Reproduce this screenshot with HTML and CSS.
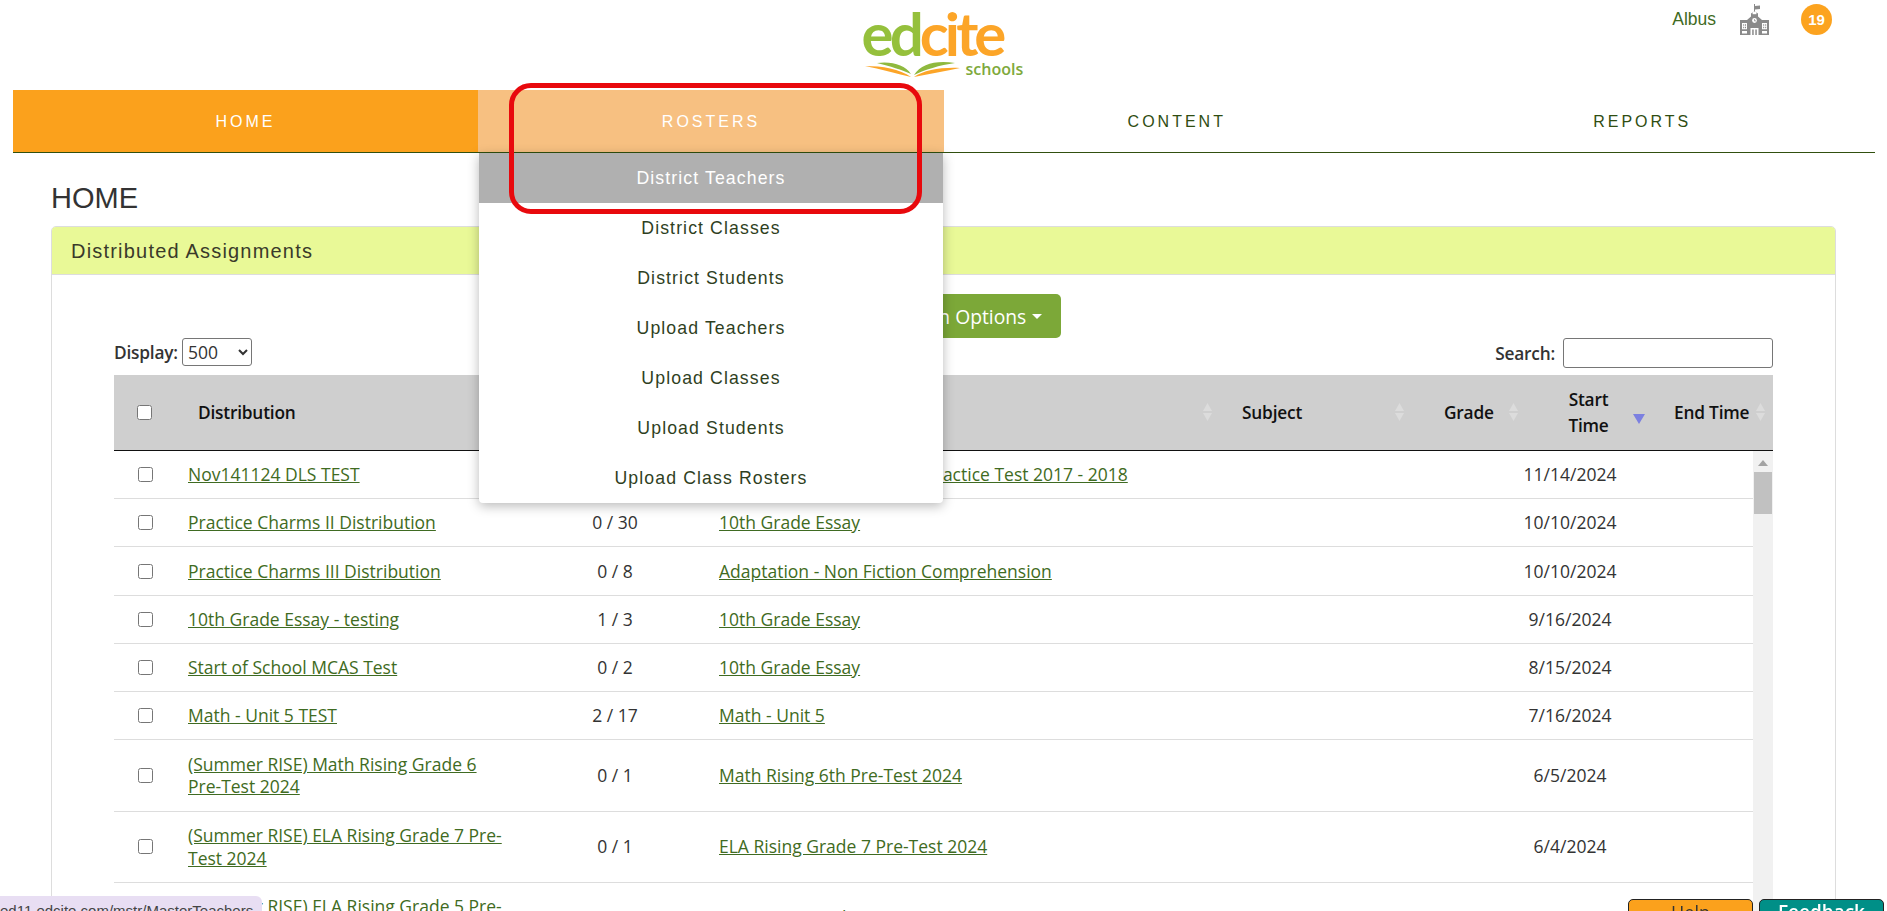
FILE: index.html
```html
<!DOCTYPE html>
<html lang="en">
<head>
<meta charset="utf-8">
<title>Edcite Schools - Home</title>
<link rel="stylesheet" href="styles.css">
</head>
<body>
<header class="top">
  <div></div>
  <a class="logo" href="#">
    <span class="logo-word"><span class="green">ed</span><span class="orange">cite</span></span>
    <span class="logo-sub">
      <svg class="book" viewBox="0 0 97 20" width="97" height="20" aria-hidden="true">
        <path fill="#fca528" d="M1 6C18 6 36 9 47 17C34 14 16 9 1 6Z"/>
        <path fill="#8fb93e" d="M13 3C28 1 41 5 47 14C38 10 26 6 13 3Z"/>
        <path fill="#8fb93e" d="M91 3C72 0 57 4 50 15C60 10 76 5 91 3Z"/>
        <path fill="#fca528" d="M96 8C78 7 60 10 50 17C65 14 82 11 96 8Z"/>
      </svg>
      <span class="logo-schools">schools</span>
    </span>
  </a>
  <div class="user">
    <span class="user-name">Albus</span>
    <svg class="school" viewBox="0 0 29 31" width="29" height="31" aria-hidden="true">
      <path fill="#8a8a8a" d="M14 0h1v2l5-0.5v3.5l-5 0.5v2l3 2v3l4 3.5h7v15.5h-29v-15.5h7l4-3.5v-3l3-2z"/>
      <g fill="#fff">
        <circle cx="14.5" cy="16.5" r="2.4"/>
        <rect x="12.6" y="7.6" width="3.8" height="2.6"/>
        <path d="M10.5 31v-7h8v7h-1.7v-5.4h-1.5v5.4h-1.6v-5.4h-1.5v5.4z"/>
        <path d="M2 19h5v6.300h-5zM3.200 20.200v1.500h1v-1.500zM5 20.200v1.500h1v-1.500zM3.200 22.700v1.600h1v-1.600zM5 22.700v1.600h1v-1.600z"/>
        <path d="M22 19h5v6.300h-5zM23.200 20.200v1.500h1v-1.500zM25.200 20.200v1.500h1v-1.500zM23.200 22.700v1.600h1v-1.600zM25.200 22.700v1.600h1v-1.600z"/>
        <rect x="2" y="27" width="5" height="2.500"/>
        <rect x="22" y="27" width="5" height="2.500"/>
      </g>
      <path fill="#8a8a8a" d="M14.200 15h.7v1.500h1.200v.7h-1.900z"/>
    </svg>
    <span class="badge">19</span>
  </div>
</header>

<nav class="nav">
  <a class="nav-item nav-home" href="#">HOME</a>
  <div class="nav-item nav-open">
    <a href="#">ROSTERS</a>
    <ul class="menu">
      <li class="menu-active"><a href="#">District Teachers</a></li>
      <li><a href="#">District Classes</a></li>
      <li><a href="#">District Students</a></li>
      <li><a href="#">Upload Teachers</a></li>
      <li><a href="#">Upload Classes</a></li>
      <li><a href="#">Upload Students</a></li>
      <li><a href="#">Upload Class Rosters</a></li>
    </ul>
  </div>
  <a class="nav-item" href="#">CONTENT</a>
  <a class="nav-item" href="#">REPORTS</a>
</nav>

<main class="main">
  <h1 class="title">HOME</h1>
  <section class="panel">
    <h2 class="panel-head">Distributed Assignments</h2>
    <div class="panel-body">
      <div class="actions"><button class="btn" type="button">Distribution Options<span class="caret"></span></button></div>
      <div class="controls">
        <label class="control">Display:
          <select class="select"><option>500</option></select>
        </label>
        <label class="control">Search:
          <input class="search" type="text">
        </label>
      </div>

      <table class="thead">
        <colgroup>
          <col class="h1"><col class="h2"><col class="h3"><col class="h4"><col class="h5"><col class="h6"><col class="h7"><col class="h8">
        </colgroup>
        <tr>
          <th class="th-check"><input class="check" type="checkbox"></th>
          <th class="th-dist">Distribution<span class="sort"></span></th>
          <th>Taken<span class="sort"></span></th>
          <th>Test<span class="sort"></span></th>
          <th class="th-subject">Subject<span class="sort"></span></th>
          <th class="th-grade">Grade<span class="sort"></span></th>
          <th class="th-start"><span class="start-label">Start<br>Time</span><span class="sort-active"></span></th>
          <th class="th-end">End Time<span class="sort"></span></th>
        </tr>
      </table>

      <div class="tbody-wrap">
        <table class="tbody">
          <colgroup>
            <col class="b1"><col class="b2"><col class="b3"><col class="b4"><col class="b5"><col class="b6"><col class="b7"><col class="b8">
          </colgroup>
          <tr><td class="c"><input class="check" type="checkbox"></td><td><a href="#">Nov141124 DLS TEST</a></td><td class="c">0 / 12</td><td><a href="#">Massachusetts MCAS Art Practice Test 2017 - 2018</a></td><td></td><td></td><td class="c">11/14/2024</td><td></td></tr>
          <tr><td class="c"><input class="check" type="checkbox"></td><td><a href="#">Practice Charms II Distribution</a></td><td class="c">0 / 30</td><td><a href="#">10th Grade Essay</a></td><td></td><td></td><td class="c">10/10/2024</td><td></td></tr>
          <tr><td class="c"><input class="check" type="checkbox"></td><td><a href="#">Practice Charms III Distribution</a></td><td class="c">0 / 8</td><td><a href="#">Adaptation - Non Fiction Comprehension</a></td><td></td><td></td><td class="c">10/10/2024</td><td></td></tr>
          <tr><td class="c"><input class="check" type="checkbox"></td><td><a href="#">10th Grade Essay - testing</a></td><td class="c">1 / 3</td><td><a href="#">10th Grade Essay</a></td><td></td><td></td><td class="c">9/16/2024</td><td></td></tr>
          <tr><td class="c"><input class="check" type="checkbox"></td><td><a href="#">Start of School MCAS Test</a></td><td class="c">0 / 2</td><td><a href="#">10th Grade Essay</a></td><td></td><td></td><td class="c">8/15/2024</td><td></td></tr>
          <tr><td class="c"><input class="check" type="checkbox"></td><td><a href="#">Math - Unit 5 TEST</a></td><td class="c">2 / 17</td><td><a href="#">Math - Unit 5</a></td><td></td><td></td><td class="c">7/16/2024</td><td></td></tr>
          <tr><td class="c"><input class="check" type="checkbox"></td><td><a href="#">(Summer RISE) Math Rising Grade 6 Pre-Test 2024</a></td><td class="c">0 / 1</td><td><a href="#">Math Rising 6th Pre-Test 2024</a></td><td></td><td></td><td class="c">6/5/2024</td><td></td></tr>
          <tr><td class="c"><input class="check" type="checkbox"></td><td><a href="#">(Summer RISE) ELA Rising Grade 7 Pre-Test 2024</a></td><td class="c">0 / 1</td><td><a href="#">ELA Rising Grade 7 Pre-Test 2024</a></td><td></td><td></td><td class="c">6/4/2024</td><td></td></tr>
          <tr><td class="c"><input class="check" type="checkbox"></td><td><a href="#">(Summer RISE) ELA Rising Grade 5 Pre-Test 2024</a></td><td class="c">0 / 1</td><td><a href="#">ELA Rising Grade 5 Pre-Test 2024</a></td><td></td><td></td><td class="c">6/4/2024</td><td></td></tr>
        </table>
        <div class="scrollbar"><span class="scroll-up"></span><span class="scroll-thumb"></span></div>
      </div>
    </div>
  </section>
</main>

<div class="annotation"></div>
<div class="status">ed11.edcite.com/mstr/MasterTeachers</div>
<button class="float-btn float-help" type="button">Help</button>
<button class="float-btn float-feedback" type="button">Feedback</button>
</body>
</html>
```

FILE: styles.css
```css
* { box-sizing: border-box; }
html, body { margin: 0; height: 911px; overflow: hidden; background: #fff; }
body { font-family: "Open Sans", "Liberation Sans", sans-serif; font-size: 17.500px; color: #333; }
a { color: inherit; text-decoration: none; }

.top { display: grid; grid-template-columns: 1fr auto 1fr; height: 90px; }
.logo { display: flex; flex-direction: column; width: 160px; padding-top: 4px; }
.logo-word { font-family: Lato, "Liberation Sans", sans-serif; font-weight: 700; font-size: 60px; line-height: 58px; letter-spacing: -3.900px; height: 57px; margin-left: -2px; }
.green { color: #95c03c; }
.orange { color: #fca528; }
.logo-sub { display: flex; align-items: flex-start; gap: 5px; margin-top: -1px; }
.book { flex: none; }
.logo-schools { font-family: "Open Sans", sans-serif; font-weight: 600; font-size: 16px; line-height: 16px; color: #7ea93c; margin-top: 1px; }

.user { display: flex; justify-content: flex-end; align-items: flex-start; padding: 4px 55px 0 0; }
.user-name { font-family: "Liberation Sans", sans-serif; font-size: 17.500px; line-height: 18px; margin: 6px 24px 0 0; color: #3f6b1f; }
.school { display: block; }
.badge { width: 31px; height: 31px; margin: 0 0 0 32px; border-radius: 50%; background: #fca31f; color: #fff; font-family: "Liberation Sans", sans-serif; font-weight: 700; font-size: 15px; line-height: 31px; text-align: center; }

.nav { display: grid; grid-template-columns: 465px 466px 1fr 1fr; margin: 0 12px 0 13px; height: 63px; border-bottom: 1px solid #31500f; font-family: "Liberation Sans", sans-serif; font-size: 16px; letter-spacing: 3px; color: #2f4d12; }
.nav-item { display: flex; align-items: center; justify-content: center; height: 62px; padding-top: 1px; position: relative; }
.nav-home { background: #fba11c; color: #fff; }
.nav-open { background: #f7c081; color: #fff; }

.menu { position: absolute; top: 63px; left: 1px; right: 1px; margin: 0; padding: 0; list-style: none; background: #fff; border-radius: 0 0 4px 4px; box-shadow: 0 3px 12px rgba(0, 0, 0, .28); font-size: 17.700px; letter-spacing: 1.100px; color: #2f3f1e; z-index: 5; }
.menu li { height: 50px; display: flex; align-items: center; justify-content: center; }
.menu-active { background: #b0b0b0; color: #fff; }

.main { margin: 0 51px; }
.title { margin: 0; padding-top: 30px; height: 73px; font-family: "Liberation Sans", sans-serif; font-weight: 400; font-size: 29px; line-height: 30px; color: #333; }
.panel { border: 1px solid #ddd; border-radius: 5px 5px 0 0; }
.panel-head { margin: 0; height: 48px; padding-left: 19px; background: #e9f997; border-bottom: 1px solid #ddd; font-family: "Liberation Sans", sans-serif; font-weight: 400; font-size: 20px; line-height: 48px; letter-spacing: 1.200px; color: #3a3a2a; border-radius: 4px 4px 0 0; }
.panel-body { padding: 19px 62px 0 62px; }

.actions { display: flex; justify-content: center; height: 44px; }
.btn { display: flex; align-items: center; gap: 6px; height: 44px; width: 236px; justify-content: center; margin-left: -1px; border: 0; border-radius: 5px; background: #7ca838; color: #fff; font-family: "Open Sans", sans-serif; font-size: 19.300px; }
.caret { width: 0; height: 0; border-left: 5px solid transparent; border-right: 5px solid transparent; border-top: 5px solid #fff; }

.controls { display: flex; justify-content: space-between; align-items: flex-start; height: 37px; }
.control { display: flex; align-items: center; gap: 4px; font-size: 17.300px; font-weight: 600; letter-spacing: -.2px; color: #333; }
.select { width: 70px; height: 28px; font-family: "Open Sans", sans-serif; font-size: 17.500px; font-weight: 500; background: #fff; color: #333; border: 1px solid #767676; border-radius: 3px; padding-left: 1px; }
.search { width: 210px; height: 30px; border: 1px solid #767676; border-radius: 3px; margin-left: 4px; }

table { border-collapse: collapse; table-layout: fixed; width: 100%; }
.thead { background: #cfcfcf; border-bottom: 1px solid #111; height: 76px; }
.thead th { position: relative; padding: 0; text-align: left; font-size: 17.300px; font-weight: 600; letter-spacing: -.2px; line-height: 26px; color: #111; }
.h1 { width: 62px; } .h2 { width: 334px; } .h3 { width: 190px; } .h4 { width: 520px; }
.h5 { width: 192px; } .h6 { width: 114px; } .h7 { width: 125px; } .h8 { width: 122px; }
.thead .th-check { text-align: center; padding-right: 2px; }
.thead .th-dist { padding-left: 22px; }
.thead .th-subject { padding-left: 22px; }
.thead .th-grade { padding-left: 32px; }
.thead .th-start { text-align: center; }
.thead .th-end { padding-left: 23px; }
.sort { position: absolute; right: 8px; top: 28px; width: 9px; height: 18px; background: #dcdcdc; clip-path: path("M4.500 0L9 8H0ZM4.500 18L0 10H9Z"); }
.sort-active { position: absolute; right: 6px; top: 39px; width: 12px; height: 10px; background: #7c80e0; clip-path: polygon(0 0, 100% 0, 50% 100%); }

.tbody-wrap { position: relative; display: block; }
.tbody { width: 1639px; }
.tbody td { padding: 12.200px 12px; line-height: 22.860px; border-bottom: 1px solid #ddd; vertical-align: middle; color: #333; }
.tbody a { color: #3f6b22; text-decoration: underline; }
.tbody .c { text-align: center; padding-left: 0; padding-right: 0; }
.b1 { width: 62px; } .b2 { width: 344px; } .b3 { width: 190px; } .b4 { width: 530px; }
.b5 { width: 160px; } .b6 { width: 110px; } .b7 { width: 120px; } .b8 { width: 123px; }
.tbody td:nth-child(4) { padding-left: 9px; }
.check { display: block; width: 15px; height: 15px; margin: 0 auto; }

.scrollbar { position: absolute; top: 0; right: 0; width: 20px; height: 500px; background: #f1f1f1; }
.scroll-up { position: absolute; top: 9px; left: 5px; width: 10px; height: 6px; background: #a3a3a3; clip-path: polygon(50% 0, 100% 100%, 0 100%); }
.scroll-thumb { position: absolute; top: 21px; left: 1px; width: 18px; height: 42px; background: #c1c1c1; }

.annotation { position: absolute; left: 509px; top: 83px; width: 413px; height: 131px; border: 5px solid #e8090d; border-radius: 22px; z-index: 10; }
.status { position: fixed; left: -8px; bottom: 0; width: 270px; height: 15px; padding: 7px 0 0 8px; overflow: hidden; background: #e8def3; border-radius: 0 6px 0 0; font-family: "Liberation Sans", sans-serif; font-size: 15px; line-height: 16px; color: #444; white-space: nowrap; z-index: 20; }
.float-btn { position: fixed; top: 899px; display: block; width: 125px; border: 1px solid #222; border-radius: 5px; z-index: 15; font-family: "Open Sans", sans-serif; line-height: 24px; text-align: center; }
.float-help { left: 1628px; padding: 0 0 6px; background: #fba11c; color: #333; font-size: 18px; }
.float-feedback { left: 1759px; padding: 0 0 7px; background: #008f87; color: #fff; font-size: 19px; font-weight: 600; }
```
